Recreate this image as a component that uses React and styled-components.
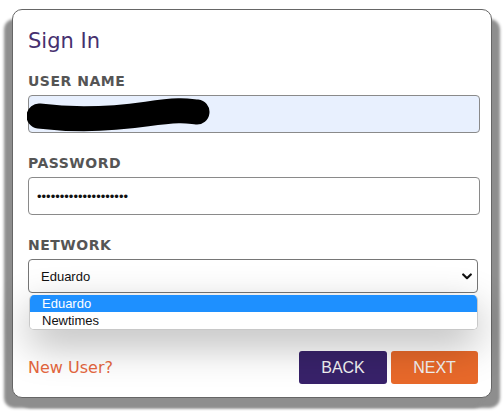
import styled, { createGlobalStyle } from 'styled-components';

const GlobalStyle = createGlobalStyle`
  body {
    margin: 0;
    background: #fff;
  }
`;

const Page = styled.div`
  box-sizing: border-box;
  min-height: 411px;
  padding: 9px 0 13px 12px;
`;

const Card = styled.div`
  box-sizing: border-box;
  width: 480px;
  height: 389px;
  padding: 19px 13px 13px 15px;
  display: flex;
  flex-direction: column;
  background: #fff;
  border: 1px solid #666;
  border-radius: 10px;
  box-shadow: -8px 10px 3px 0 #8e8e8e, 8px 10px 3px 0 #8e8e8e;
`;

const Title = styled.h2`
  margin: 0;
  font-family: 'DejaVu Sans', Verdana, sans-serif;
  font-size: 21px;
  font-weight: normal;
  line-height: 24px;
  color: #46306f;
`;

const Label = styled.label`
  display: block;
  margin: ${({ $first }) => ($first ? '20px' : '22px')} 0 6px;
  font-family: 'DejaVu Sans', Verdana, sans-serif;
  font-size: 14px;
  font-weight: bold;
  letter-spacing: 0.5px;
  line-height: 16px;
  color: #555;
`;

const FieldWrap = styled.div`
  position: relative;
`;

const TextInput = styled.input`
  box-sizing: border-box;
  display: block;
  width: calc(100% + 2px);
  height: 38px;
  margin: 0;
  padding: 0 8px;
  border: 1px solid #8a8a8a;
  border-radius: 4px;
  background: ${({ $filled }) => ($filled ? '#e8f0fe' : '#fff')};
  font-family: 'Liberation Sans', Arial, sans-serif;
  font-size: 13px;
  color: #111;
  outline: none;
`;

const Redaction = styled.svg`
  position: absolute;
  left: -1px;
  top: 0;
`;

const SelectBox = styled.div`
  box-sizing: border-box;
  display: flex;
  align-items: center;
  justify-content: space-between;
  height: 34px;
  padding: 0 5px 0 12px;
  border: 1px solid #767676;
  border-radius: 4px;
  background: #fff;
  font-family: 'Liberation Sans', Arial, sans-serif;
  font-size: 13px;
  color: #111;
`;

const OptionList = styled.ul`
  position: absolute;
  top: calc(100% + 2px);
  left: 1px;
  right: 0;
  margin: 0;
  padding: 0;
  list-style: none;
  background: #fff;
  border: 1px solid #c8c8c8;
  border-top: none;
  border-radius: 5px;
  overflow: hidden;
  box-shadow: 0 14px 40px rgba(0, 0, 0, 0.3);
  z-index: 2;
`;

const Option = styled.li`
  height: 17px;
  line-height: 17px;
  padding-left: 12px;
  font-family: 'Liberation Sans', Arial, sans-serif;
  font-size: 13px;
  color: ${({ $active }) => ($active ? '#fff' : '#111')};
  background: ${({ $active }) => ($active ? '#1e90ff' : '#fff')};
`;

const Footer = styled.div`
  margin-top: auto;
  display: flex;
  align-items: center;
  justify-content: space-between;
`;

const NewUser = styled.a`
  font-family: 'DejaVu Sans', Verdana, sans-serif;
  font-size: 16px;
  line-height: 20px;
  color: #e6673e;
  text-decoration: none;
`;

const Buttons = styled.div`
  display: flex;
  gap: 4px;
`;

const Button = styled.button`
  width: ${({ $w }) => $w}px;
  height: 33px;
  padding: 0;
  border: none;
  border-radius: 3px;
  background: ${({ $primary }) => ($primary ? '#e8692a' : '#38226a')};
  color: #f2f2f2;
  font-family: 'Liberation Sans', Arial, sans-serif;
  font-size: 16px;
`;

const networks = ['Eduardo', 'Newtimes'];

const App = () => {
  return (
    <Page>
      <GlobalStyle />
      <Card>
        <Title>Sign In</Title>

        <Label $first>USER NAME</Label>
        <FieldWrap>
          <TextInput $filled readOnly defaultValue="" />
          <Redaction width="190" height="38" viewBox="0 0 190 38">
            <path
              d="M12 21 C 45 25, 85 24, 120 19 S 160 16, 170 17"
              fill="none"
              stroke="#000"
              strokeWidth="25"
              strokeLinecap="round"
            />
          </Redaction>
        </FieldWrap>

        <Label>PASSWORD</Label>
        <TextInput type="password" readOnly defaultValue="xxxxxxxxxxxxxxxxxxxx" />

        <Label>NETWORK</Label>
        <FieldWrap>
          <SelectBox>
            <span>Eduardo</span>
            <svg width="10" height="7" viewBox="0 0 10 7">
              <polyline
                points="1.2,1.5 5,5.2 8.8,1.5"
                fill="none"
                stroke="#111"
                strokeWidth="2.2"
                strokeLinecap="round"
                strokeLinejoin="round"
              />
            </svg>
          </SelectBox>
          <OptionList>
            {networks.map((name, i) => (
              <Option key={name} $active={i === 0}>{name}</Option>
            ))}
          </OptionList>
        </FieldWrap>

        <Footer>
          <NewUser href="#">New User?</NewUser>
          <Buttons>
            <Button $w={88}>BACK</Button>
            <Button $w={87} $primary>NEXT</Button>
          </Buttons>
        </Footer>
      </Card>
    </Page>
  );
};

export default App;
